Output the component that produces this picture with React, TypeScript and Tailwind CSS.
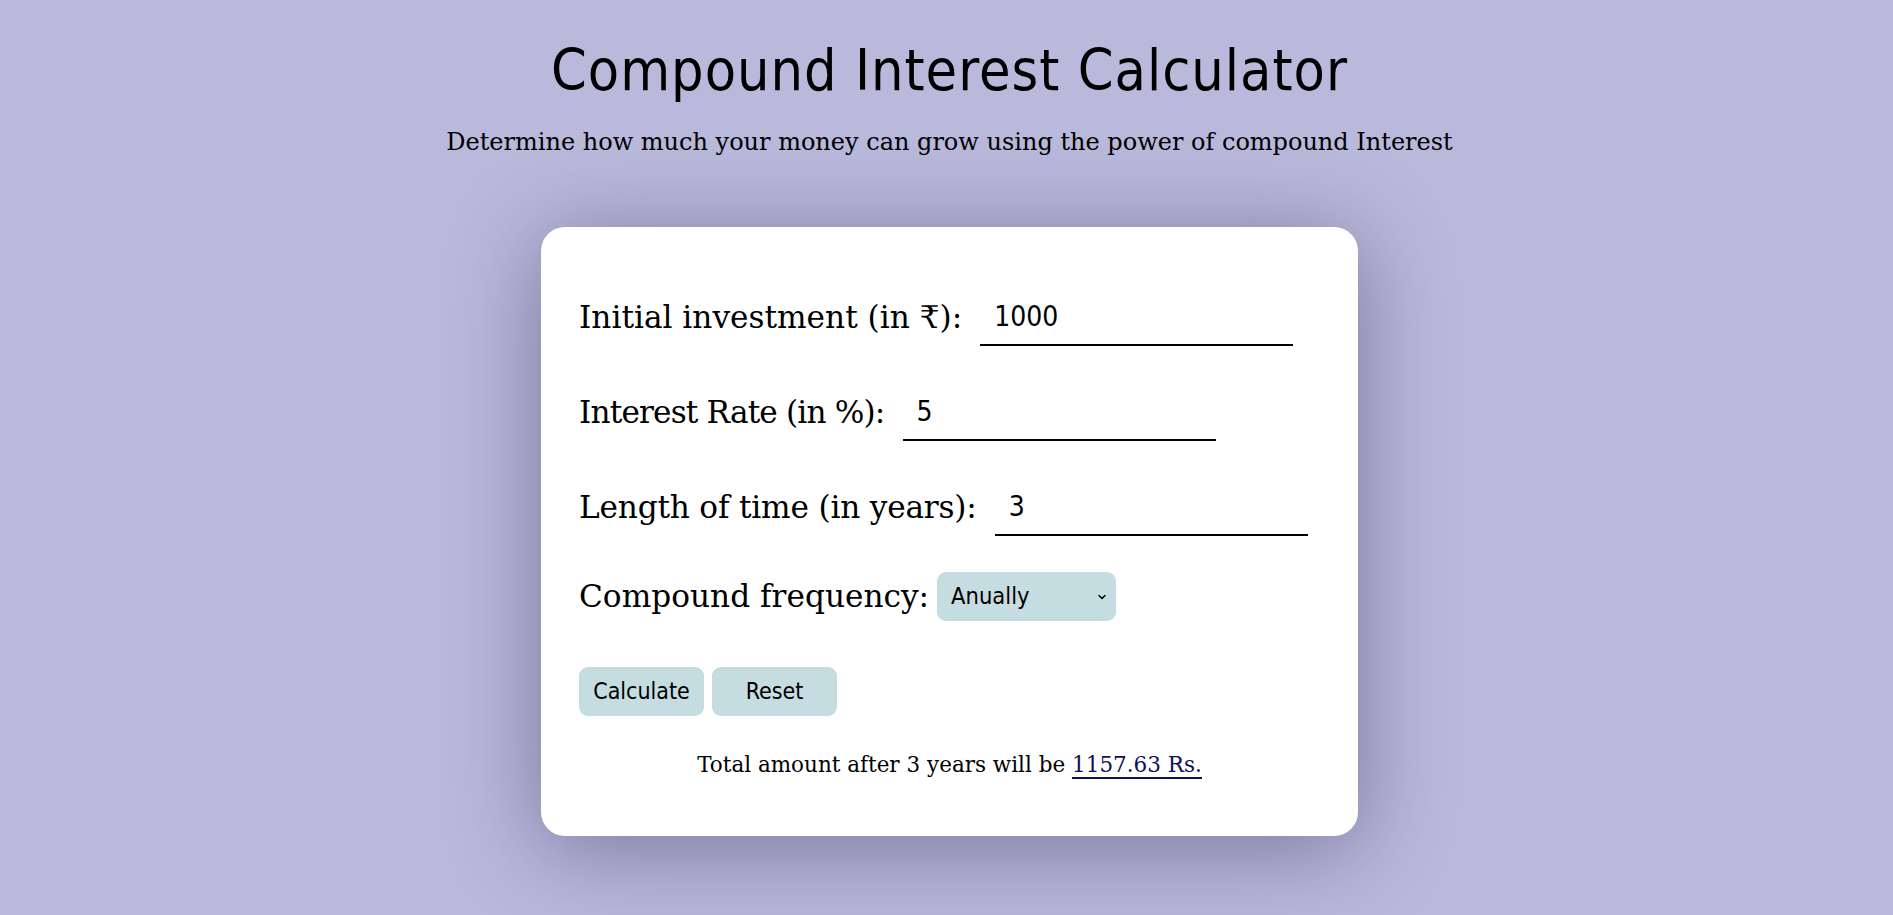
import { useState } from 'react';
import { ChevronDown } from 'lucide-react';

const slab = "font-['DejaVu_Serif',serif]";
const ui = "font-['DejaVu_Sans_Condensed','DejaVu_Sans',sans-serif]";

export default function App() {
  const [principal, setPrincipal] = useState('1000');
  const [rate, setRate] = useState('5');
  const [years, setYears] = useState('3');
  const [freq, setFreq] = useState('1');
  const [result, setResult] = useState('1157.63');

  const calculate = () => {
    const p = parseFloat(principal) || 0;
    const r = (parseFloat(rate) || 0) / 100;
    const t = parseFloat(years) || 0;
    const n = parseFloat(freq) || 1;
    setResult((p * Math.pow(1 + r / n, n * t)).toFixed(2));
  };

  const reset = () => {
    setPrincipal('');
    setRate('');
    setYears('');
    setResult('0.00');
  };

  return (
    <div className="min-h-screen w-full bg-[#b9b9dc] flex flex-col items-center pt-[42px] pl-[6px]">
      <h1 className={`${ui} text-[57px] leading-none text-black tracking-[1px]`}>Compound Interest Calculator</h1>
      <p className={`${slab} text-[24px] text-black mt-[25px]`}>
        Determine how much your money can grow using the power of compound Interest
      </p>

      <div className="mt-[67px] w-[817px] bg-white rounded-[24px] shadow-[0_12px_90px_rgba(40,40,80,0.45)] pl-[38px] pr-[38px] pt-[61px] pb-[55px]">
        <div className="flex items-center">
          <label className={`${slab} text-[31.2px] text-black`}>Initial investment (in ₹):</label>
          <input
            value={principal}
            onChange={(e) => setPrincipal(e.target.value)}
            className={`${ui} ml-[18px] w-[313px] h-[58px] border-b-2 border-black px-[14px] text-[28px] outline-none`}
          />
        </div>
        <div className="flex items-center mt-[37px]">
          <label className={`${slab} text-[31.2px] text-black tracking-[-0.85px]`}>Interest Rate (in %):</label>
          <input
            value={rate}
            onChange={(e) => setRate(e.target.value)}
            className={`${ui} ml-[18px] w-[313px] h-[58px] border-b-2 border-black px-[14px] text-[28px] outline-none`}
          />
        </div>
        <div className="flex items-center mt-[37px]">
          <label className={`${slab} text-[31.2px] text-black tracking-[-0.2px]`}>Length of time (in years):</label>
          <input
            value={years}
            onChange={(e) => setYears(e.target.value)}
            className={`${ui} ml-[18px] w-[313px] h-[58px] border-b-2 border-black px-[14px] text-[28px] outline-none`}
          />
        </div>

        <div className="flex items-center mt-[36px]">
          <label className={`${slab} text-[31.2px] text-black`}>Compound frequency:</label>
          <div className="relative ml-[8px]">
            <select
              value={freq}
              onChange={(e) => setFreq(e.target.value)}
              className={`${ui} appearance-none w-[179px] h-[49px] rounded-[9px] bg-[#c5dde0] pl-[14px] text-[23.5px] text-black outline-none`}
            >
              <option value="1">Anually</option>
              <option value="2">Half-yearly</option>
              <option value="4">Quarterly</option>
              <option value="12">Monthly</option>
            </select>
            <ChevronDown className="absolute right-[8px] top-[19px] w-[12px] h-[12px] pointer-events-none" strokeWidth={3} />
          </div>
        </div>

        <div className="flex gap-[8px] mt-[46px]">
          <button
            onClick={calculate}
            className={`${ui} w-[125px] h-[49px] rounded-[9px] bg-[#c5dde0] text-[23px] text-black`}
          >
            Calculate
          </button>
          <button
            onClick={reset}
            className={`${ui} w-[125px] h-[49px] rounded-[9px] bg-[#c5dde0] text-[23px] text-black`}
          >
            Reset
          </button>
        </div>

        <p className={`${slab} text-[21.5px] text-black text-center mt-[33px]`}>
          Total amount after {years || 0} years will be{' '}
          <span className="text-[#10105a] border-b-2 border-[#10105a]">{result} Rs.</span>
        </p>
      </div>
    </div>
  );
}
